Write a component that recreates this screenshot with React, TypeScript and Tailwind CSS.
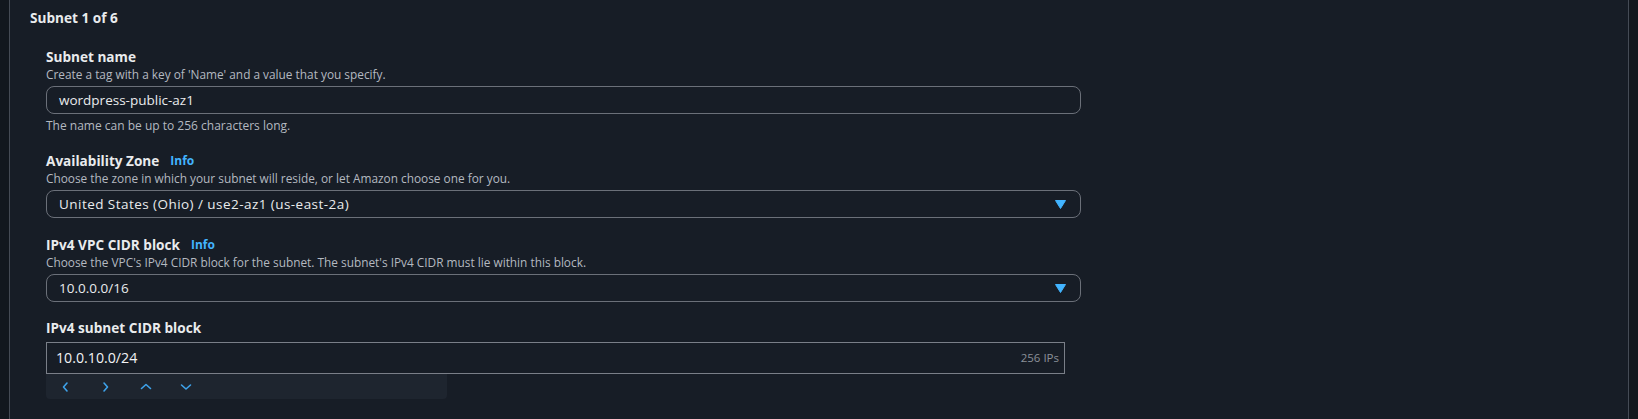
import React from "react";

const font = { fontFamily: '"Open Sans", "Noto Sans", Arial, sans-serif' };

function Caret() {
  return (
    <svg width="11" height="9" viewBox="0 0 11 9" className="shrink-0">
      <path d="M0.5 0.5 H10.5 L5.5 8.5 Z" fill="#42b4ff" stroke="#42b4ff" strokeWidth="1" strokeLinejoin="round" />
    </svg>
  );
}

function Chevron({ dir }: { dir: "left" | "right" | "up" | "down" }) {
  const d = {
    left: "M7 2 L3.5 6 L7 10",
    right: "M4 2 L7.5 6 L4 10",
    up: "M1.5 7.5 L6 3.5 L10.5 7.5",
    down: "M1.5 4 L6 8 L10.5 4",
  }[dir];
  return (
    <svg width="12" height="12" viewBox="0 0 12 12">
      <path d={d} fill="none" stroke="#3ea2ea" strokeWidth="1.6" strokeLinecap="round" strokeLinejoin="round" />
    </svg>
  );
}

function Label({ children, info }: { children: React.ReactNode; info?: boolean }) {
  return (
    <div className="flex items-center h-[18px] leading-[18px]">
      <span className="text-[13.6px] font-bold text-[#e9ebed]">{children}</span>
      {info && <span className="ml-[11px] text-[12px] font-bold text-[#42b4ff]">Info</span>}
    </div>
  );
}

function Desc({ children }: { children: React.ReactNode }) {
  return <div className="h-[16px] leading-[16px] text-[11.85px] text-[#b4b9c0]">{children}</div>;
}

function Select({ value, wide }: { value: string; wide?: boolean }) {
  return (
    <div className="mt-[4px] w-[1035px] h-[28px] rounded-[8px] border border-[#6b7079] flex items-center pl-[12px] pr-[14px] justify-between">
      <span className={wide ? "text-[13.5px] tracking-[0.45px] text-[#e9ebed]" : "text-[13.5px] text-[#e9ebed]"}>{value}</span>
      <Caret />
    </div>
  );
}

export default function App() {
  return (
    <div className="w-[1638px] h-[419px] bg-[#12171e] flex overflow-hidden" style={font}>
      <div className="ml-[9px] w-[1620px] h-[419px] border-x border-[#454b55] bg-[#171d26] pl-[20px] pt-[9px]">
        <div className="h-[18px] leading-[18px] text-[13.6px] font-bold text-[#e9ebed]">Subnet 1 of 6</div>

        <div className="pl-[16px]">
          <div className="mt-[21px]">
            <Label>Subnet name</Label>
            <Desc>Create a tag with a key of 'Name' and a value that you specify.</Desc>
            <div className="mt-[4px] w-[1035px] h-[28px] rounded-[8px] border border-[#6b7079] flex items-center pl-[12px]">
              <span className="text-[13.5px] text-[#e9ebed]">wordpress-public-az1</span>
            </div>
            <div className="mt-[4px] h-[16px] leading-[16px] text-[12px] text-[#b4b9c0]">The name can be up to 256 characters long.</div>
          </div>

          <div className="mt-[18px]">
            <Label info>Availability Zone</Label>
            <Desc>Choose the zone in which your subnet will reside, or let Amazon choose one for you.</Desc>
            <Select value="United States (Ohio) / use2-az1 (us-east-2a)" wide />
          </div>

          <div className="mt-[18px]">
            <Label info>IPv4 VPC CIDR block</Label>
            <Desc>Choose the VPC's IPv4 CIDR block for the subnet. The subnet's IPv4 CIDR must lie within this block.</Desc>
            <Select value="10.0.0.0/16" />
          </div>

          <div className="mt-[17px]">
            <Label>IPv4 subnet CIDR block</Label>
            <div className="mt-[5px] w-[1019px] h-[32px] border border-[#7a7f88] flex items-center justify-between pl-[9px] pr-[5px]">
              <span className="text-[14.2px] text-[#f2f3f5]">10.0.10.0/24</span>
              <span className="text-[11.5px] text-[#8b9098]">256 IPs</span>
            </div>
            <div className="w-[401px] h-[25px] bg-[#1e252f] rounded-b-[4px] flex items-center pl-[14px] gap-[28px]">
              <Chevron dir="left" />
              <Chevron dir="right" />
              <Chevron dir="up" />
              <Chevron dir="down" />
            </div>
          </div>
        </div>
      </div>
    </div>
  );
}
